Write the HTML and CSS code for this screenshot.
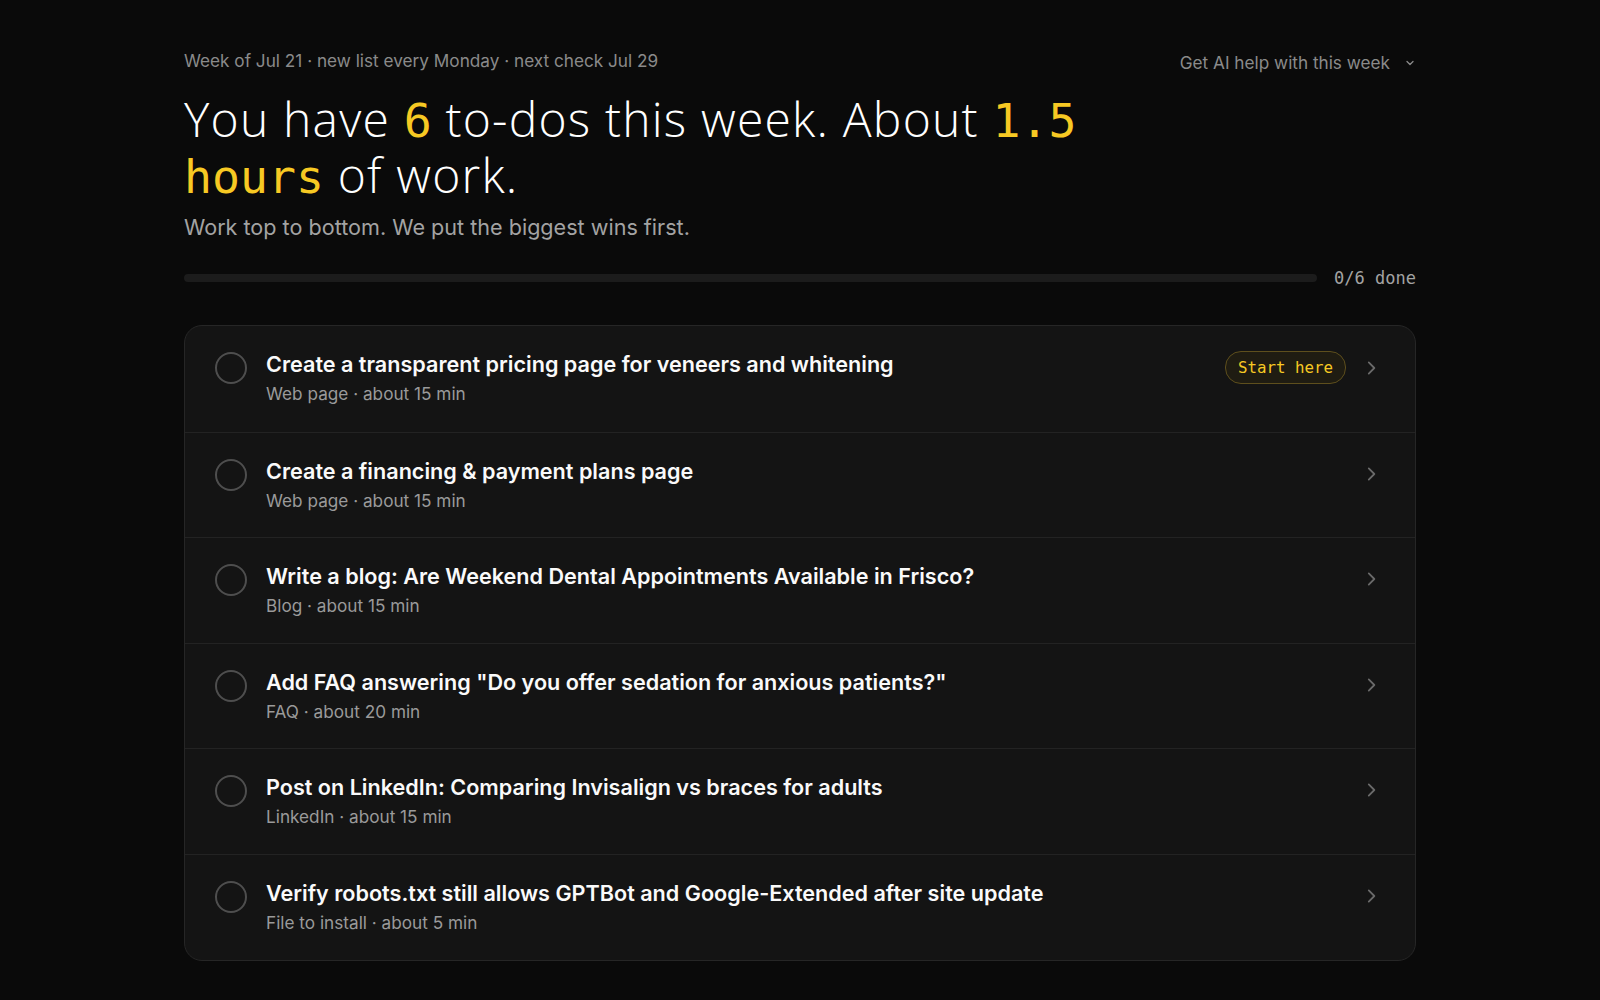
FILE: index.html
```html
<!DOCTYPE html>
<html lang="en">
<head>
    <meta charset="UTF-8">
    <meta name="viewport" content="width=device-width, initial-scale=1.0">
    <title>This week</title>
    <link rel="stylesheet" href="styles.css">
</head>
<body>
    <main class="page">
        <!-- Header -->
        <div class="top">
            <div class="meta">Week of Jul 21 · new list every Monday · next check Jul 29</div>
            <button class="ai-help">Get AI help with this week
                <svg width="12" height="12" viewBox="0 0 12 12"><path d="M3 4.5l3 3 3-3" fill="none" stroke="currentColor" stroke-width="1.3" stroke-linecap="round" stroke-linejoin="round"/></svg>
            </button>
        </div>
        <h1 class="headline">You have <span class="num">6</span> to-dos this week. About <span class="num">1.5 hours</span> of work.</h1>
        <p class="lead">Work top to bottom. We put the biggest wins first.</p>

        <div class="progress">
            <div class="track"><div class="fill" style="width: 0%"></div></div>
            <span class="count">0/6 done</span>
        </div>

        <!-- Task list -->
        <ul class="tasks">
            <li class="task">
                <span class="check"></span>
                <div class="info">
                    <div class="title">Create a transparent pricing page for veneers and whitening</div>
                    <div class="sub">Web page · about 15 min</div>
                </div>
                <div class="side">
                    <span class="badge">Start here</span>
                    <svg class="chev" width="18" height="18" viewBox="0 0 18 18"><path d="M7 4l5 5-5 5" fill="none" stroke="currentColor" stroke-width="1.6" stroke-linecap="round" stroke-linejoin="round"/></svg>
                </div>
            </li>
            <li class="task">
                <span class="check"></span>
                <div class="info">
                    <div class="title">Create a financing &amp; payment plans page</div>
                    <div class="sub">Web page · about 15 min</div>
                </div>
                <div class="side">
                    <svg class="chev" width="18" height="18" viewBox="0 0 18 18"><path d="M7 4l5 5-5 5" fill="none" stroke="currentColor" stroke-width="1.6" stroke-linecap="round" stroke-linejoin="round"/></svg>
                </div>
            </li>
            <li class="task">
                <span class="check"></span>
                <div class="info">
                    <div class="title">Write a blog: Are Weekend Dental Appointments Available in Frisco?</div>
                    <div class="sub">Blog · about 15 min</div>
                </div>
                <div class="side">
                    <svg class="chev" width="18" height="18" viewBox="0 0 18 18"><path d="M7 4l5 5-5 5" fill="none" stroke="currentColor" stroke-width="1.6" stroke-linecap="round" stroke-linejoin="round"/></svg>
                </div>
            </li>
            <li class="task">
                <span class="check"></span>
                <div class="info">
                    <div class="title">Add FAQ answering "Do you offer sedation for anxious patients?"</div>
                    <div class="sub">FAQ · about 20 min</div>
                </div>
                <div class="side">
                    <svg class="chev" width="18" height="18" viewBox="0 0 18 18"><path d="M7 4l5 5-5 5" fill="none" stroke="currentColor" stroke-width="1.6" stroke-linecap="round" stroke-linejoin="round"/></svg>
                </div>
            </li>
            <li class="task">
                <span class="check"></span>
                <div class="info">
                    <div class="title">Post on LinkedIn: Comparing Invisalign vs braces for adults</div>
                    <div class="sub">LinkedIn · about 15 min</div>
                </div>
                <div class="side">
                    <svg class="chev" width="18" height="18" viewBox="0 0 18 18"><path d="M7 4l5 5-5 5" fill="none" stroke="currentColor" stroke-width="1.6" stroke-linecap="round" stroke-linejoin="round"/></svg>
                </div>
            </li>
            <li class="task">
                <span class="check"></span>
                <div class="info">
                    <div class="title">Verify robots.txt still allows GPTBot and Google-Extended after site update</div>
                    <div class="sub">File to install · about 5 min</div>
                </div>
                <div class="side">
                    <svg class="chev" width="18" height="18" viewBox="0 0 18 18"><path d="M7 4l5 5-5 5" fill="none" stroke="currentColor" stroke-width="1.6" stroke-linecap="round" stroke-linejoin="round"/></svg>
                </div>
            </li>
        </ul>
    </main>
</body>
</html>
```

FILE: styles.css
```css
body {
    margin: 0;
    background-color: #0a0a0a;
    color: #fff;
    font-family: Inter, "Noto Sans", sans-serif;
}
.page {
    max-width: 1232px;
    margin: 0 auto;
    padding-top: 48px;
}
.top {
    display: flex;
    justify-content: space-between;
    align-items: center;
}
.meta {
    font-size: 17.2px;
    color: #8a8a8a;
}
.ai-help {
    display: flex;
    align-items: center;
    gap: 14px;
    background: none;
    border: none;
    padding: 0;
    margin-top: 4px;
    color: #8a8a8a;
    font-family: inherit;
    font-size: 17.2px;
    cursor: pointer;
}
.headline {
    margin: 18px 0 0;
    max-width: 920px;
    font-family: "Open Sans", sans-serif;
    font-weight: 300;
    font-size: 48px;
    line-height: 56px;
    letter-spacing: 1.2px;
}
.headline .num {
    font-family: "DejaVu Sans Mono", monospace;
    font-weight: 400;
    font-size: 46.5px;
    line-height: 1;
    letter-spacing: 0;
    color: #f7c923;
}
.lead {
    margin: 11px 0 0;
    font-size: 21.6px;
    color: #a3a3a3;
}
.progress {
    display: flex;
    align-items: center;
    gap: 17px;
    margin-top: 28px;
}
.track {
    flex: 1;
    height: 8px;
    border-radius: 4px;
    background: #1c1c1c;
}
.fill {
    height: 100%;
    border-radius: 4px;
    background: #f7c923;
}
.count {
    font-family: "DejaVu Sans Mono", monospace;
    font-size: 17px;
    color: #a3a3a3;
}
.tasks {
    list-style: none;
    margin: 37px 0 0;
    padding: 0;
    background: #141414;
    border: 1px solid #262626;
    border-radius: 18px;
    overflow: hidden;
}
.task {
    display: flex;
    align-items: flex-start;
    gap: 19px;
    height: 105.6px;
    box-sizing: border-box;
    padding: 25px 32px 0 30px;
    border-top: 1px solid #232323;
}
.task:first-child {
    border-top: none;
}
.check {
    flex: none;
    width: 28px;
    height: 28px;
    border: 2px solid #4e4e4e;
    border-radius: 50%;
    margin-top: 1px;
}
.info {
    flex: 1;
}
.title {
    font-size: 21.6px;
    font-weight: 600;
    line-height: 26px;
    color: #fafafa;
}
.sub {
    margin-top: 6px;
    font-size: 17.2px;
    color: #9a9a9a;
}
.side {
    display: flex;
    align-items: center;
    gap: 15px;
    min-height: 32px;
}
.badge {
    padding: 0 12px;
    height: 31px;
    line-height: 31px;
    border: 1px solid #5e4f1d;
    border-radius: 16px;
    background: #1f1c12;
    color: #f7c923;
    font-family: "DejaVu Sans Mono", monospace;
    font-size: 15.8px;
}
.chev {
    width: 20px;
    height: 20px;
    margin-right: 2px;
    color: #6a6a6a;
}
```
